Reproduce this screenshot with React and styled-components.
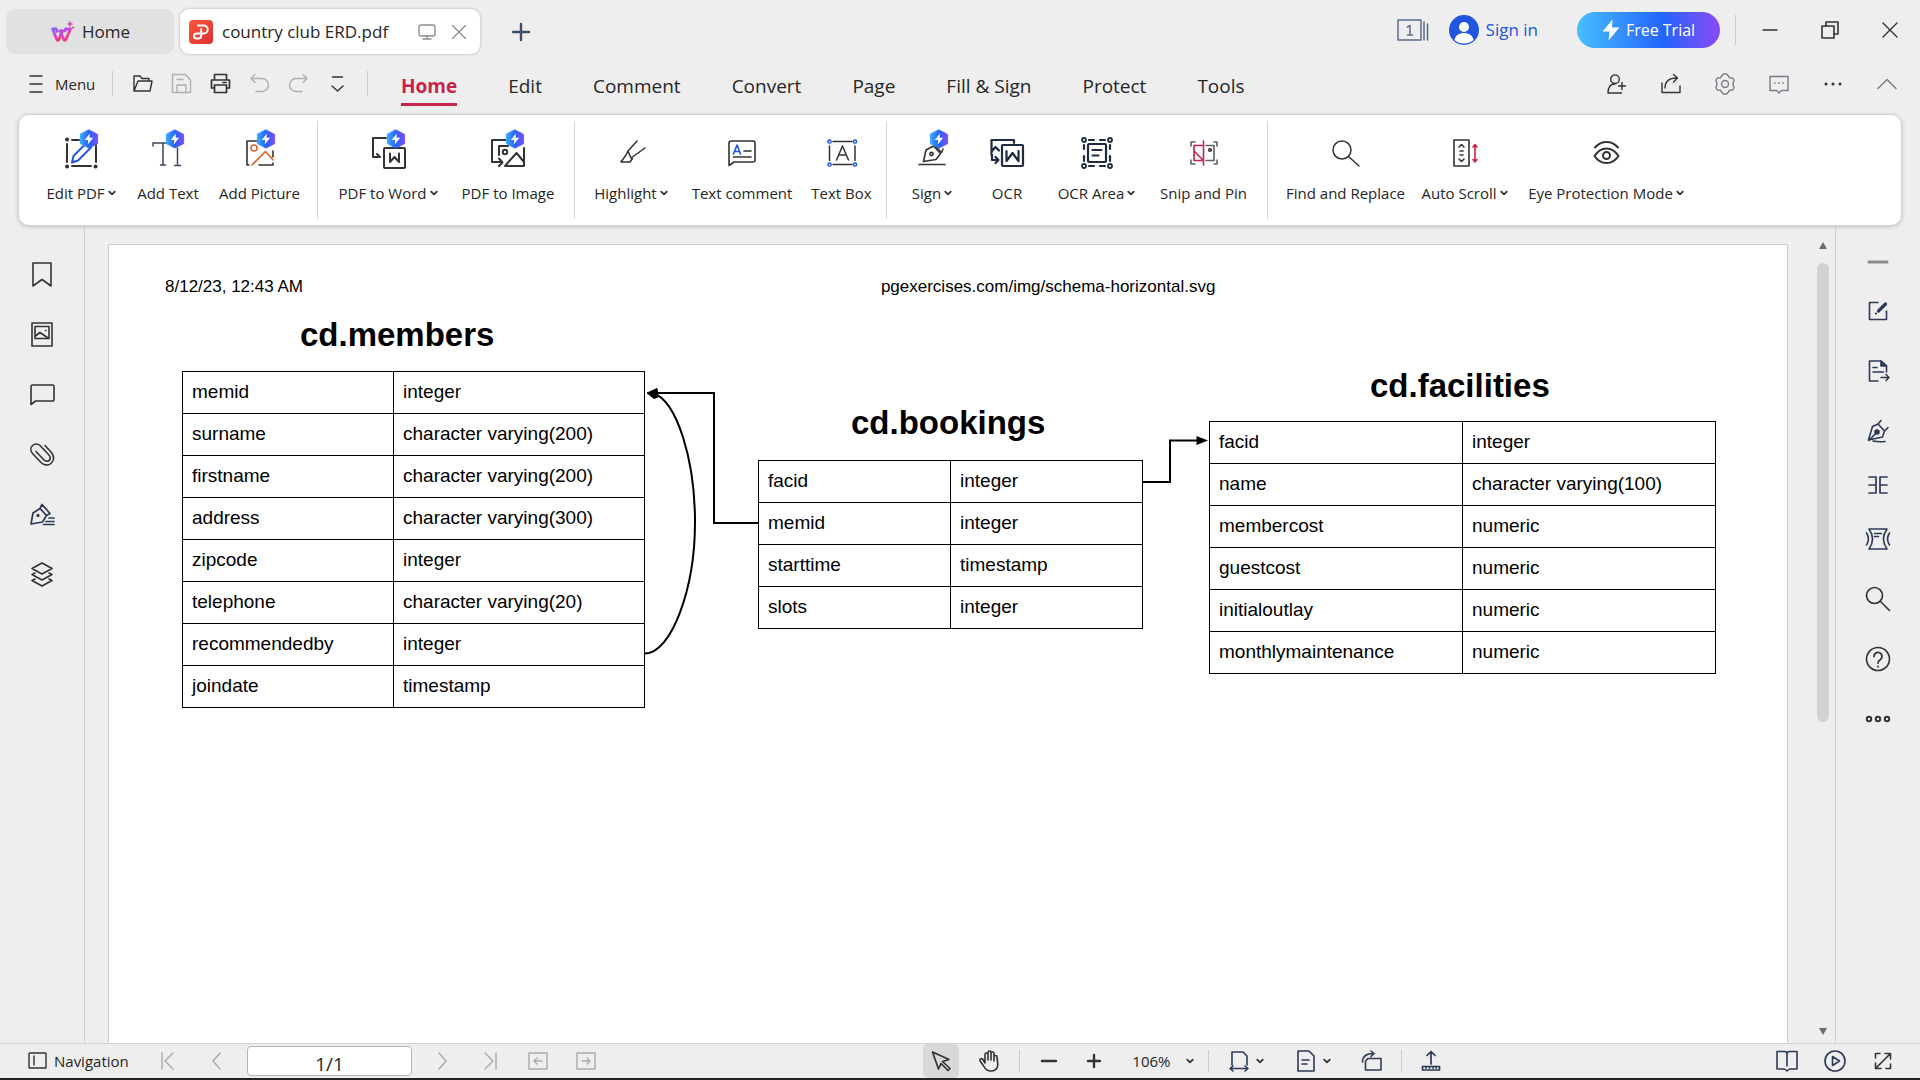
import React from "react";
import styled, { createGlobalStyle, css } from "styled-components";

const GlobalStyle = createGlobalStyle`
  *, *::before, *::after { box-sizing: border-box; }
  html, body { margin: 0; padding: 0; }
  body {
    background: #eeeeee;
    color: #262626;
    font-family: "Open Sans", "Noto Sans", sans-serif;
  }
  button, input, select { font-family: inherit; color: inherit; }
`;

const INK = "#333333";
const NAVY = "#2c3a57";
const BLUE = "#2356e0";
const RED = "#c8234a";

/* ---------- shared pieces ---------- */

const Shell = styled.div`
  display: flex;
  flex-direction: column;
  height: 100vh;
  overflow: hidden;
  border-bottom: 2px solid #222226;
`;

const PlainButton = styled.button`
  display: inline-flex;
  align-items: center;
  justify-content: center;
  padding: 0;
  border: 0;
  background: none;
  cursor: pointer;
  white-space: nowrap;
`;

const Slot = styled(PlainButton)`
  flex: 0 0 auto;
  width: ${(p) => p.$w}px;
  height: ${(p) => p.$h || 36}px;
  ${(p) => p.$active && css`
    background: #d8d8d8;
    border-radius: 5px;
  `}
`;

const Rule = styled.span`
  flex: 0 0 auto;
  width: 1px;
  height: ${(p) => p.$h}px;
  margin: 0 ${(p) => p.$gap}px;
  background: #cbcbcb;
`;

const Drawing = styled.svg`
  display: block;
  flex: 0 0 auto;
  overflow: visible;
`;

function Icon({ w = 24, h = 24, color = INK, sw = 1.4, children }) {
  return (
    <Drawing width={w} height={h} viewBox={`0 0 ${w} ${h}`} fill="none" stroke={color}
      strokeWidth={sw} strokeLinecap="round" strokeLinejoin="round" aria-hidden="true">
      {children}
    </Drawing>
  );
}

const Chevron = () => (
  <Icon w={8} h={8} sw={1.8}><path d="M1.2 2.6 4 5.4 6.8 2.6" /></Icon>
);

/* ---------- title bar ---------- */

const TitleBar = styled.header`
  display: flex;
  align-items: center;
  height: 63px;
  padding: 0 0 0 6px;
`;

const WindowTab = styled.div`
  display: flex;
  align-items: center;
  height: 45px;
  border-radius: 9px;
  font-size: 17px;
  line-height: 24px;
`;

const HomeTab = styled(PlainButton)`
  width: 168px;
  height: 45px;
  gap: 8px;
  border-radius: 9px;
  background: #e1e1e1;
  font-size: 17px;
  line-height: 24px;
`;

const FileTab = styled(WindowTab)`
  width: 300px;
  margin-left: 6px;
  padding: 0 5px 0 9px;
  background: #ffffff;
  box-shadow: 0 0 3px rgba(0, 0, 0, 0.28);
`;

const FileName = styled.span`
  flex: 1;
  margin-left: 9px;
  white-space: nowrap;
`;

const TitleRight = styled.div`
  display: flex;
  align-items: center;
  height: 60px;
  margin: 0 0 3px auto;
`;

const SignIn = styled(PlainButton)`
  gap: 7px;
  margin: 0 39px 0 20px;
  color: ${BLUE};
  font-size: 17px;
  line-height: 24px;
`;

const Trial = styled(PlainButton)`
  width: 143px;
  height: 36px;
  gap: 6px;
  margin-right: 11px;
  border-radius: 18px;
  color: #ffffff;
  background: linear-gradient(90deg, #45bfff 0%, #2464fc 60%, #8a4af5 100%);
  font-size: 16px;
  line-height: 24px;
`;

function WpsLogo() {
  return (
    <Drawing width="24" height="24" viewBox="0 0 24 24" aria-hidden="true">
      <defs>
        <linearGradient id="wps" x1="0" y1="0" x2="1" y2="1">
          <stop offset="0" stopColor="#7a6bff" />
          <stop offset="0.5" stopColor="#e03ad0" />
          <stop offset="1" stopColor="#ff3b2e" />
        </linearGradient>
      </defs>
      <g fill="none" stroke="url(#wps)" strokeWidth="2.8" strokeLinejoin="round">
        <path d="M7.500 12.500 6.200 9H2.600L7 20H8.600L13 9.600" />
        <path d="M9.500 9.600 14 20H15.600L20.600 9H15.500L14.500 12" />
      </g>
      <path d="M20 1.600v5M17.500 4.100h5" stroke="#d640a8" strokeWidth="1.500" />
      <path d="M23 6.400v2.400M21.800 7.600h2.400" stroke="#ff4068" strokeWidth="1" />
    </Drawing>
  );
}

function PdfLogo() {
  return (
    <Drawing width="24" height="24" viewBox="0 0 24 24" aria-hidden="true">
      <defs>
        <linearGradient id="pdf" x1="0" y1="0" x2="1" y2="1">
          <stop offset="0" stopColor="#fb5a3c" />
          <stop offset="1" stopColor="#dd2d33" />
        </linearGradient>
      </defs>
      <rect width="24" height="24" rx="4" fill="url(#pdf)" />
      <path d="M9 5.600h5.800a3.900 3.900 0 0 1 0 7.800H7.600a2.600 2.600 0 0 0 0 5.200h1.600c2 0 3-1 3-2.800V9" fill="none" stroke="#fff" strokeWidth="2" strokeLinecap="round" strokeLinejoin="round" />
    </Drawing>
  );
}

function TopBar() {
  return (
    <TitleBar>
      <HomeTab><WpsLogo />Home</HomeTab>
      <FileTab>
        <PdfLogo />
        <FileName>country club ERD.pdf</FileName>
        <Slot $w={32} aria-label="Display">
          <Icon w={18} h={18} color="#8d8d8d"><rect x="1" y="2" width="16" height="11" rx="2" /><path d="M9 13v3M5 16h8" /></Icon>
        </Slot>
        <Slot $w={32} aria-label="Close tab">
          <Icon w={16} h={16} color="#8d8d8d"><path d="M1.500 1.500 14.500 14.500M14.500 1.500 1.500 14.500" /></Icon>
        </Slot>
      </FileTab>
      <Slot $w={82} aria-label="New tab">
        <Icon w={20} h={20} color="#3f4f70" sw={2.4}><path d="M10 2v16M2 10h16" /></Icon>
      </Slot>
      <TitleRight>
        <Slot $w={32} aria-label="Window list">
          <Icon w={32} h={24} color="#5a6c8c" sw={1.5}>
            <rect x="1" y="2" width="23" height="20" />
            <path d="M27 4v18M30.500 6v16" />
            <path d="M10.500 9 13 7.500V17M10.500 17h5" />
          </Icon>
        </Slot>
        <SignIn>
          <Drawing width="30" height="30" viewBox="0 0 30 30" aria-hidden="true">
            <circle cx="15" cy="15" r="15" fill={BLUE} />
            <circle cx="15" cy="12" r="5" fill="#fff" />
            <path d="M5.500 25c1-5 5-7 9.500-7s8.500 2 9.500 7c-2.500 2.400-5.800 3.600-9.500 3.600S8 27.400 5.500 25Z" fill="#fff" />
          </Drawing>
          Sign in
        </SignIn>
        <Trial>
          <Drawing width="18" height="22" viewBox="0 0 18 22" aria-hidden="true">
            <path d="M10.500 0.500 0.500 12.500H7.500L6.500 21.500 17.500 8.500H10Z" fill="#fff" />
          </Drawing>
          Free Trial
        </Trial>
        <Rule $h={30} $gap={4} />
        <Slot $w={60} aria-label="Minimize"><Icon w={16} h={16}><path d="M1 8h14" /></Icon></Slot>
        <Slot $w={60} aria-label="Restore">
          <Icon w={18} h={18} sw={1.6}><rect x="1" y="5" width="12" height="12" /><path d="M5 5V1h12v12h-4" /></Icon>
        </Slot>
        <Slot $w={60} aria-label="Close"><Icon w={16} h={16}><path d="M1 1 15 15M15 1 1 15" /></Icon></Slot>
      </TitleRight>
    </TitleBar>
  );
}

/* ---------- menu row ---------- */

const MenuRow = styled.nav`
  display: flex;
  align-items: center;
  height: 51px;
  padding: 0 6px 10px 29px;
`;

const MenuButton = styled(PlainButton)`
  gap: 12px;
  width: 73px;
  justify-content: flex-start;
  font-size: 15px;
  line-height: 24px;
`;

const MenuTabs = styled.div`
  display: flex;
  gap: 51px;
  margin-left: 23px;
`;

const MenuTab = styled(PlainButton)`
  height: 40px;
  margin-top: 5px;
  padding-top: 2px;
  border-bottom: 3px solid ${(p) => (p.$on ? RED : "transparent")};
  color: ${(p) => (p.$on ? RED : "#262626")};
  font-size: 19px;
  font-weight: ${(p) => (p.$on ? 700 : 400)};
  line-height: 28px;
`;

const MenuRight = styled.div`
  display: flex;
  margin-left: auto;
`;

const TABS = ["Home", "Edit", "Comment", "Convert", "Page", "Fill & Sign", "Protect", "Tools"];

const QUICK = [
  ["Open", INK, <path key="a" d="M2 18V3h6l2 2.500h7V8M2 18 6 8h14l-2 10Z" />],
  ["Save", "#b0b0b0", <path key="a" d="M1.500 1.500H14.500L19.500 7V19.500H1.500ZM6 19V12h9v7M6 6.500h6" />],
  ["Print", INK, <path key="a" strokeWidth="1.7" d="M4.500 7V1.500h12V7M4.500 15H1.500V7h18v8h-3M4.500 12h12v7.500h-12ZM13 9.500h3" />],
  ["Undo", "#b0b0b0", <path key="a" d="M6 1.500 2 5.500 6 9.500M2 5.500H13a6.500 6.500 0 0 1 0 13H7" />],
  ["Redo", "#b0b0b0", <path key="a" d="M15 1.500 19 5.500 15 9.500M19 5.500H8a6.500 6.500 0 0 0 0 13h6" />],
  ["Customize", INK, <path key="a" d="M5.500 4h10M5 13l5.500 5 5.500-5" />],
];

const GRAY = "#777c88";
const MENU_TOOLS = [
  ["Invite", INK, <path key="a" d="M9 10.500a4.300 4.300 0 1 0 0-8.600 4.300 4.300 0 0 0 0 8.600ZM9 11C4.500 11 2 14 2 20h13.500M16 9.500v7M12.500 13h7" />],
  ["Share", INK, <path key="a" d="M2 10v9.500h18V13M5 15c0-6 4-10 12-10M13.500 1.500 17.500 5 13.500 9" />],
  ["Settings", GRAY, <g key="a"><path d="M8 2.500 9.500 1h3L14 2.500l1.500 2.200 3.300.3 1.300 2.500-1.300 3.500 1.300 3.500-1.300 2.500-3.300.3L14 19.500 12.500 21h-3L8 19.500l-1.500-2.200-3.300-.3-1.300-2.500L3.200 11 1.900 7.500 3.200 5l3.300-.3Z" /><circle cx="11" cy="11" r="3.500" /></g>],
  ["Feedback", GRAY, <path key="a" d="M2 3.500h18v14h-6.500L11 20l-2.500-2.500H2ZM6.500 10h.6M10.700 10h.6M14.900 10h.6" />],
  ["More", INK, <g key="a" fill={INK} stroke="none"><circle cx="4" cy="11" r="1.500" /><circle cx="11" cy="11" r="1.500" /><circle cx="18" cy="11" r="1.500" /></g>],
  ["Collapse ribbon", GRAY, <path key="a" d="M2 15.500 11 6.500l9 9" />],
];

function Menu() {
  return (
    <MenuRow aria-label="Main menu">
      <MenuButton>
        <Icon w={14} h={18}><path d="M1 1h12M1 9h12M1 17h12" /></Icon>Menu
      </MenuButton>
      <Rule $h={25} $gap={10} />
      {QUICK.map(([label, color, shape]) => (
        <Slot key={label} $w={39} aria-label={label}>
          <Icon w={21} h={21} color={color}>{shape}</Icon>
        </Slot>
      ))}
      <Rule $h={25} $gap={10} />
      <MenuTabs>
        {TABS.map((t) => <MenuTab key={t} $on={t === "Home"}>{t}</MenuTab>)}
      </MenuTabs>
      <MenuRight>
        {MENU_TOOLS.map(([label, color, shape]) => (
          <Slot key={label} $w={54} aria-label={label}>
            <Icon w={22} h={22} color={color}>{shape}</Icon>
          </Slot>
        ))}
      </MenuRight>
    </MenuRow>
  );
}

/* ---------- ribbon ---------- */

const Ribbon = styled.section`
  display: flex;
  flex: 0 0 auto;
  height: 112px;
  margin: 0 18px;
  padding: 0 17px;
  border: 1px solid #d2d2d2;
  border-radius: 11px;
  background: #ffffff;
  box-shadow: 0 1px 4px rgba(0, 0, 0, 0.18);
`;

const RibbonRule = styled.span`
  flex: 0 0 auto;
  width: 1px;
  margin: 6px 8px;
  background: #d6d6d6;
`;

const Tool = styled(PlainButton)`
  flex: 0 0 auto;
  flex-direction: column;
  justify-content: flex-start;
  width: ${(p) => p.$w}px;
  padding-top: 14px;
`;

const ToolLabel = styled.span`
  display: flex;
  align-items: center;
  gap: 3px;
  font-size: 15px;
  line-height: 32px;
`;

function Bolt({ x }) {
  return (
    <g stroke="none">
      <path d={`M${x} 1 ${x + 8.6} 5.400V14.600L${x} 19 ${x - 8.6} 14.600V5.400Z`} fill="url(#bolt)" stroke="url(#bolt)" strokeWidth="1" />
      <path d={`M${x + 0.8} 4.600 ${x - 4.2} 11H${x - 0.8}L${x - 1.2} 15.400 ${x + 4.2} 8.800H${x + 0.6}Z`} fill="#fff" />
    </g>
  );
}

const ORANGE = "#d8662c";

const ART = {
  editPdf: (
    <g strokeWidth="2">
      <path d="M6 15v18M11 11h7M35 16v17M11 37h19" />
      <path d="M6 10.500h.1M6 37.500h.1M34.500 37.500h.1" strokeWidth="4" strokeLinejoin="miter" />
      <path d="M11 33.500 12.500 27 25.500 14 30 18.500 17 31.500Z" stroke={BLUE} />
      <Bolt x={28} />
    </g>
  ),
  addText: (
    <g stroke="#3c465e" strokeWidth="1.500">
      <path d="M5 17V14H21M15 14V36M12.500 36h5M29.500 19V36M26.500 36.500h6" />
      <Bolt x={27} />
    </g>
  ),
  addPicture: (
    <g strokeWidth="1.600">
      <path d="M22 12H7V36M33 22V28M19 36H33V34M7 36H9" />
      <circle cx="14" cy="19" r="3" stroke={ORANGE} />
      <path d="M12 36 25.500 22.500 33 31" stroke={ORANGE} />
      <Bolt x={26} />
    </g>
  ),
  toWord: (
    <g strokeWidth="2">
      <path d="M18 9H5V28H12M9 25l3 3" />
      <rect x="16" y="19" width="21" height="20" rx="1" />
      <path d="M22 24.500V33L26.500 28 31 33V24.500" />
      <Bolt x={28} />
    </g>
  ),
  toImage: (
    <g strokeWidth="2">
      <path d="M20 11H4V33H14M11 29.500 14.500 33.500 11 37" />
      <path d="M20 17H11V26M36 19V37H17L28.500 24 36 33" />
      <circle cx="17" cy="23" r="2.200" />
      <Bolt x={27} />
    </g>
  ),
  highlight: (
    <path d="M26 12 17 22 20 29 34 19M17 22 15 26 10 33H19L21.500 29.500" strokeWidth="1.500" />
  ),
  comment: (
    <g strokeWidth="1.600">
      <path d="M9 12H31a2 2 0 0 1 2 2V31a2 2 0 0 1-2 2H12L7 36.500V14a2 2 0 0 1 2-2Z" />
      <path d="M11.500 25 15 16 18.500 25M12.700 22.500h4.600" stroke={BLUE} />
      <path d="M22 22h7M11.500 28h17.500" />
    </g>
  ),
  textBox: (
    <g strokeWidth="1.500">
      <path d="M11 12.500H30M7.500 17V31.500M33 17V31.500M11 35.500H30" />
      <path d="M14.500 31 20.500 17 26.500 31M17 26h7" />
      <g stroke={BLUE}><circle cx="7.500" cy="12.500" r="1.600" /><circle cx="33" cy="12.500" r="1.600" /><circle cx="7.500" cy="35.500" r="1.600" /><circle cx="33" cy="35.500" r="1.600" /></g>
    </g>
  ),
  sign: (
    <g strokeWidth="1.600">
      <path d="M7 35.500H33" />
      <path d="M11.500 32.500 14 21 21.500 17 28.500 24.500 24 30.500Z" />
      <circle cx="19.500" cy="25" r="1.600" />
      <path d="M23 17 29.500 23.500 31 20" />
      <Bolt x={27} />
    </g>
  ),
  ocr: (
    <g stroke="#1e2b40" strokeWidth="2.200">
      <path d="M27 14V11H4.500V26M5 22 8.500 18 12 21.500M5 26V31H10.500M8.500 28 11.500 31 8.500 34" />
      <rect x="15" y="16" width="21" height="21" rx="1" />
      <path d="M19.500 22V32L25.500 24 31.500 32V22" />
    </g>
  ),
  ocrArea: (
    <g stroke="#1e2b40" strokeWidth="2.200">
      <g strokeWidth="1.800"><circle cx="7" cy="11" r="2" /><circle cx="33" cy="11" r="2" /><circle cx="7" cy="37" r="2" /><circle cx="33" cy="37" r="2" /></g>
      <path d="M12 11h5M23 11h5M12 37h5M23 37h5M7 16v4M7 27v5M33 16v4M33 27v5" />
      <rect x="11" y="15" width="18" height="18" rx="1" />
      <path d="M15.500 21h9M15.500 26.500h6" />
    </g>
  ),
  snip: (
    <g strokeWidth="1.600">
      <path d="M7 17V13H11M30 13H33V17M7 31V35H11M30 35H33V31M22 16.500H30V31.500H22" stroke="#606060" />
      <circle cx="26" cy="21" r="1.300" />
      <path d="M19.500 12V36M19.500 16.500H10V31.500H19.500L10 22" stroke={RED} />
    </g>
  ),
  find: <path d="M16 30a9 9 0 1 0 0-18 9 9 0 0 0 0 18ZM22.500 27.500 33 37" strokeWidth="1.500" />,
  scroll: (
    <g strokeWidth="1.600">
      <rect x="9" y="11" width="15" height="26" />
      <path d="M14 18 16.500 15.500 19 18M14 30 16.500 32.500 19 30M15 22h3M15 26h3" />
      <path d="M30 15.500V33M28 18 30 15.500 32 18M28 30.500 30 33 32 30.500" stroke={RED} />
    </g>
  ),
  eye: (
    <g strokeWidth="2">
      <path d="M8.500 27c3-4.600 7.500-7.500 12-7.500s9 2.900 12 7.500c-3 4.600-7.500 7-12 7s-9-2.400-12-7Z" />
      <circle cx="20.500" cy="26.500" r="3.500" />
      <path d="M9 18.500c3-3.500 7-5.500 11.500-5.500s8.500 2 11.500 5.500" />
    </g>
  ),
};

const GROUPS = [
  [["Edit PDF", 90, "editPdf", true], ["Add Text", 84, "addText"], ["Add Picture", 99, "addPicture"]],
  [["PDF to Word", 124, "toWord", true], ["PDF to Image", 116, "toImage"]],
  [["Highlight", 96, "highlight", true], ["Text comment", 126, "comment"], ["Text Box", 73, "textBox"]],
  [["Sign", 74, "sign", true], ["OCR", 76, "ocr"], ["OCR Area", 103, "ocrArea", true], ["Snip and Pin", 111, "snip"]],
  [["Find and Replace", 139, "find"], ["Auto Scroll", 99, "scroll", true], ["Eye Protection Mode", 184, "eye", true]],
];

function RibbonBar() {
  return (
    <Ribbon aria-label="Home tools">
      <Drawing width="0" height="0" aria-hidden="true">
        <defs>
          <linearGradient id="bolt" x1="0" y1="0" x2="1" y2="0">
            <stop offset="0" stopColor="#3aa9ff" />
            <stop offset="0.500" stopColor="#2563fb" />
            <stop offset="1" stopColor="#7b4ff8" />
          </linearGradient>
        </defs>
      </Drawing>
      {GROUPS.map((group, i) => (
        <React.Fragment key={i}>
          {i > 0 && <RibbonRule />}
          {group.map(([label, w, art, menu]) => (
            <Tool key={label} $w={w}>
              <Icon w={40} h={48}>{ART[art]}</Icon>
              <ToolLabel>{label}{menu && <Chevron />}</ToolLabel>
            </Tool>
          ))}
        </React.Fragment>
      ))}
    </Ribbon>
  );
}

/* ---------- workspace ---------- */

const Workspace = styled.main`
  display: flex;
  flex: 1 1 0;
  min-height: 0;
`;

const LeftRail = styled.aside`
  display: flex;
  flex: 0 0 85px;
  flex-direction: column;
  align-items: center;
  padding-top: 18px;
  border-right: 1px solid #cfcfcf;
`;

const RightRail = styled(LeftRail)`
  padding-top: 17px;
  border-right: 0;
  border-left: 1px solid #cfcfcf;
`;

const Viewer = styled.div`
  display: flex;
  flex: 1;
  min-width: 0;
  padding: 18px 0 0 23px;
`;

const ScrollBar = styled.div`
  display: flex;
  flex: 0 0 47px;
  flex-direction: column;
  align-items: center;
  padding: 0 0 8px 22px;
`;

const Thumb = styled.div`
  flex: 0 0 58%;
  width: 12px;
  margin-top: 14px;
  border-radius: 6px;
  background: #d2d2d2;
`;

const ScrollArrow = styled.span`
  width: 0;
  height: 0;
  border: 4px solid transparent;
  border-top-width: ${(p) => (p.$down ? 7 : 0)}px;
  border-bottom-width: ${(p) => (p.$down ? 0 : 7)}px;
  border-top-color: ${(p) => (p.$down ? "#6c6c6c" : "transparent")};
  border-bottom-color: ${(p) => (p.$down ? "transparent" : "#6c6c6c")};
  margin-top: ${(p) => (p.$down ? "auto" : "-2px")};
`;

const Sheet = styled.article`
  position: relative;
  flex: 1;
  min-width: 0;
  overflow: hidden;
  border: 1px solid #d0d0d0;
  border-bottom: 0;
  background: #ffffff;
  color: #000000;
  font-family: "Liberation Sans", Arial, sans-serif;
`;

const SheetHead = styled.div`
  display: grid;
  grid-template-columns: 46% 1fr;
  padding-top: 30px;
  font-size: 17px;
  line-height: 24px;
`;

const PrintDate = styled.span`
  padding-left: 56px;
`;

const EntityName = styled.h2`
  position: absolute;
  left: ${(p) => p.$x}px;
  top: ${(p) => p.$y}px;
  margin: 0;
  font-size: 33px;
  line-height: 40px;
`;

const Entity = styled.table`
  position: absolute;
  left: ${(p) => p.$x}px;
  top: ${(p) => p.$y}px;
  width: ${(p) => p.$w}px;
  border-collapse: collapse;
  table-layout: fixed;
  font-size: 19px;
  line-height: 24px;
`;

const FirstCol = styled.col`
  width: ${(p) => p.$w}px;
`;

const Cell = styled.td`
  height: 42px;
  padding: 0 0 2px 9px;
  border: 1px solid #000000;
`;

const Links = styled.svg`
  position: absolute;
  left: 0;
  top: 0;
  width: 1400px;
  height: 500px;
`;

const ENTITIES = [
  {
    name: "cd.members", x: 73, y: 126, w: 463, col: 211, nameX: 191, nameY: 70,
    rows: [["memid", "integer"], ["surname", "character varying(200)"], ["firstname", "character varying(200)"], ["address", "character varying(300)"], ["zipcode", "integer"], ["telephone", "character varying(20)"], ["recommendedby", "integer"], ["joindate", "timestamp"]],
  },
  {
    name: "cd.bookings", x: 649, y: 215, w: 385, col: 192, nameX: 742, nameY: 158,
    rows: [["facid", "integer"], ["memid", "integer"], ["starttime", "timestamp"], ["slots", "integer"]],
  },
  {
    name: "cd.facilities", x: 1100, y: 176, w: 507, col: 253, nameX: 1261, nameY: 121,
    rows: [["facid", "integer"], ["name", "character varying(100)"], ["membercost", "numeric"], ["guestcost", "numeric"], ["initialoutlay", "numeric"], ["monthlymaintenance", "numeric"]],
  },
];

function Diagram() {
  return (
    <>
      {ENTITIES.map((e) => (
        <React.Fragment key={e.name}>
          <EntityName $x={e.nameX} $y={e.nameY}>{e.name}</EntityName>
          <Entity $x={e.x} $y={e.y} $w={e.w} aria-label={e.name}>
            <colgroup><FirstCol $w={e.col} /><col /></colgroup>
            <tbody>
              {e.rows.map(([field, type]) => (
                <tr key={field}><Cell>{field}</Cell><Cell>{type}</Cell></tr>
              ))}
            </tbody>
          </Entity>
        </React.Fragment>
      ))}
      <Links viewBox="0 0 1400 500" fill="none" stroke="#000" strokeWidth="2" aria-hidden="true">
        <path d="M649 278H605V148H545" />
        <path d="M536 408.500C562 408 586 345 586 277 586 215 568 156 544 148" />
        <path d="M538 148 548 143.500 549 152 545 153.500Z" fill="#000" strokeWidth="1" />
        <path d="M1034 237H1061V195.500H1090" />
        <path d="M1099 195.500 1087.500 191V200Z" fill="#000" stroke="none" />
      </Links>
    </>
  );
}

const LEFT_TOOLS = [
  ["Bookmarks", INK, <path key="a" d="M4 2H22V25L13 18.500 4 25Z" />],
  ["Thumbnails", INK, <g key="a"><rect x="3" y="2" width="20" height="23" /><rect x="6" y="5.500" width="14" height="12" /><path d="M6.500 15 11 11.500 19 17M16.500 9.500h.5" /></g>],
  ["Comments", INK, <path key="a" d="M3.500 4h20a1.500 1.500 0 0 1 1.500 1.500V18.500A1.500 1.500 0 0 1 23.500 20H6.500L2 23.500V5.500A1.500 1.500 0 0 1 3.500 4Z" />],
  ["Attachments", INK, <path key="a" d="M16 4.500 21.500 10.500C26 15 25 20 22 22.500S14.500 24 12 21.500L4 13C1 10 1.500 6.500 3.500 4.500S9 2.500 11 4.500L19.500 13.500C22 16 21.500 18.500 20 19.500S16 20 14.500 18.500L7 10.500" />],
  ["Signatures", NAVY, <g key="a" strokeWidth="1.700"><path d="M2 23 4 12 11 7.500 17.500 14.500 13.500 21ZM11 7.500 13 3.500 21 12.500 17.500 14.500" /><circle cx="9" cy="14.500" r="0.800" /><path d="M20 17h5M17 20.500h8M14.500 23.500H25" /></g>],
  ["Layers", INK, <path key="a" d="M13 2 23 7.500 13 13 3 7.500ZM6 12 3 13.500 13 19 23 13.500 20 12M6 18 3 19.500 13 25 23 19.500 20 18" />],
];

const RIGHT_TOOLS = [
  ["Collapse", 38, "#8b8b8b", <path key="a" strokeWidth="3" d="M3 12h18" />],
  ["Edit", 60, NAVY, <g key="a"><path d="M12 3.500H3.500V20.500H20.500V12" /><path d="M12.500 12 19.500 5" strokeWidth="3.200" /><path d="M9.800 14.600h.2" strokeWidth="2" /></g>],
  ["Export", 60, NAVY, <g key="a"><path d="M12 22H3.500V2H15L20.500 7V13M7 8.500h4M7 13h10.500M15 18.500h8M20 15.500 23 18.500 20 21.500" /><path d="M15 2V7H20.500Z" fill={NAVY} /></g>],
  ["Sign", 60, NAVY, <g key="a"><path d="M2.500 21 6.500 7.500 12 5 18.500 12 16.500 18ZM12 5 15 1.500M18.500 12 22 8.500M3 21.500 11 13M7 22c5 1 8 1 12 .5" /><circle cx="11" cy="13" r="2" fill={NAVY} /></g>],
  ["Split and merge", 48, NAVY, <path key="a" strokeWidth="1.700" d="M3 4h7V20H3M3 12h7M21 4h-7V20h7M14 12h7" />],
  ["Compress", 60, NAVY, <path key="a" d="M3 2H21C16 9 16 15 21 22H3C8 15 8 9 3 2ZM8.500 6.500h7M8.500 9.500h4M.5 6c2.600 4 2.600 8 0 12M23.500 6c-2.600 4-2.600 8 0 12" />],
  ["Search", 60, INK, <path key="a" d="M8.500 16.500a8 8 0 1 0 0-16 8 8 0 0 0 0 16ZM14.500 14.500 23.500 23.500" />],
  ["Help", 60, INK, <g key="a"><circle cx="12" cy="12" r="11.500" /><path d="M8 9.500a4 4 0 1 1 6.500 3c-1.600 1-2.500 1.600-2.500 3.500M12 19.500v.2" strokeWidth="1.800" /></g>],
  ["More tools", 60, INK, <g key="a" strokeWidth="2"><circle cx="3" cy="12" r="2.200" /><circle cx="12" cy="12" r="2.200" /><circle cx="21" cy="12" r="2.200" /></g>],
];

function Body() {
  return (
    <Workspace>
      <LeftRail>
        {LEFT_TOOLS.map(([label, color, shape]) => (
          <Slot key={label} $w={60} $h={60} aria-label={label}>
            <Icon w={26} h={27} color={color} sw={1.6}>{shape}</Icon>
          </Slot>
        ))}
      </LeftRail>
      <Viewer>
        <Sheet>
          <SheetHead>
            <PrintDate>8/12/23, 12:43 AM</PrintDate>
            <span>pgexercises.com/img/schema-horizontal.svg</span>
          </SheetHead>
          <Diagram />
        </Sheet>
        <ScrollBar>
          <ScrollArrow />
          <Thumb />
          <ScrollArrow $down />
        </ScrollBar>
      </Viewer>
      <RightRail>
        {RIGHT_TOOLS.map(([label, h, color, shape]) => (
          <Slot key={label} $w={60} $h={h} aria-label={label}>
            <Icon color={color} sw={1.6}>{shape}</Icon>
          </Slot>
        ))}
      </RightRail>
    </Workspace>
  );
}

/* ---------- status bar ---------- */

const StatusBar = styled.footer`
  display: flex;
  flex: 0 0 auto;
  align-items: center;
  height: 35px;
  padding-right: 13px;
  border-top: 1px solid #d2d2d2;
`;

const StatusLeft = styled.div`
  display: flex;
  flex: 0 0 48%;
  align-items: center;
  padding-left: 28px;
`;

const StatusMiddle = styled.div`
  display: flex;
  align-items: center;
  padding-left: 8px;
`;

const StatusRight = styled.div`
  display: flex;
  margin-left: auto;
`;

const NavButton = styled(PlainButton)`
  justify-content: flex-start;
  gap: 7px;
  width: 117px;
  font-size: 15px;
  line-height: 24px;
`;

const PageField = styled.input`
  width: 165px;
  height: 30px;
  margin: 0 6px;
  padding: 5px 0 0;
  border: 1px solid #b4b4b4;
  border-radius: 4px;
  background: #ffffff;
  font-size: 19px;
  line-height: 24px;
  text-align: center;
`;

const ZoomLabel = styled.label`
  display: flex;
  align-items: center;
  width: 76px;
  margin-left: 21px;
`;

const ZoomSelect = styled.select`
  appearance: none;
  width: 54px;
  margin: 0;
  padding: 0;
  border: 0;
  background: none;
  font-size: 15px;
  line-height: 24px;
`;

const MenuSlot = styled(PlainButton)`
  gap: 7px;
  width: ${(p) => p.$w}px;
  height: 34px;
`;

const PALE = "#aaaaaa";
const first = [
  ["First page", <path key="a" d="M4 3v16M15 3 7 11l8 8" />],
  ["Previous page", <path key="a" d="M14 3 7 11l7 8" />],
];
const last = [
  ["Next page", <path key="a" d="M8 3l7 8-7 8" />],
  ["Last page", <path key="a" d="M17 3v16M6 3l8 8-8 8" />],
  ["Back", <path key="a" d="M2 3h18v16H2ZM15 11H7M10 8 7 11l3 3" />],
  ["Forward", <path key="a" d="M2 3h18v16H2ZM7 11h8M12 8l3 3-3 3" />],
];

function Status() {
  return (
    <StatusBar>
      <StatusLeft>
        <NavButton>
          <Icon w={19} h={18}><rect x="1" y="1" width="17" height="15" rx="0.500" /><path d="M6 4v9" /></Icon>
          Navigation
        </NavButton>
        {first.map(([label, shape]) => (
          <Slot key={label} $w={48} $h={34} aria-label={label}><Icon w={22} h={22} color={PALE}>{shape}</Icon></Slot>
        ))}
        <PageField aria-label="Page number" defaultValue="1/1" />
        {last.map(([label, shape]) => (
          <Slot key={label} $w={48} $h={34} aria-label={label}><Icon w={22} h={22} color={PALE}>{shape}</Icon></Slot>
        ))}
      </StatusLeft>
      <StatusMiddle>
        <Slot $w={36} $h={34} $active aria-label="Select">
          <Icon w={22} h={22} sw={1.7}><path d="M2.500 2 19 9.500 12.500 11.500 20 18.500 18 20.500 11 13.500 8.500 19Z" /></Icon>
        </Slot>
        <Slot $w={60} $h={34} aria-label="Hand">
          <Icon w={22} h={22} sw={1.6}><path d="M7 12.500V4.500a1.500 1.500 0 0 1 3 0V10M10 10V2.500a1.500 1.500 0 0 1 3 0V10M13 10V3.500a1.500 1.500 0 0 1 3 0V11M16 7a1.500 1.500 0 0 1 3 0c0 3 1.500 6 .5 9.500C18.500 20 16 21 13 21c-3.500 0-5.500-1.500-7-4.500L1.800 10.500C1.500 8.500 4 8 5 9.500L7 13" /></Icon>
        </Slot>
        <Rule $h={22} $gap={0} />
        <Slot $w={57} $h={34} aria-label="Zoom out"><Icon w={20} h={20} sw={2.4}><path d="M3 10h14" /></Icon></Slot>
        <Slot $w={34} $h={34} aria-label="Zoom in"><Icon w={20} h={20} sw={2.4}><path d="M4 10h12M10 4v12" /></Icon></Slot>
        <ZoomLabel>
          <ZoomSelect aria-label="Zoom" defaultValue="106"><option value="106">106%</option></ZoomSelect>
          <Chevron />
        </ZoomLabel>
        <Rule $h={22} $gap={0} />
        <MenuSlot $w={74} aria-label="Fit width">
          <Icon w={20} h={22} color={NAVY} sw={1.6}><path d="M3 15V2H14L18 6V15M1 18.500H19M4 16 1 18.500 4 21M16 16 19 18.500 16 21" /></Icon>
          <Chevron />
        </MenuSlot>
        <MenuSlot $w={60} aria-label="Page layout">
          <Icon w={20} h={22} color={NAVY} sw={1.6}><path d="M2 1H13L18 6V21H2ZM6 10h7M6 14h5" /></Icon>
          <Chevron />
        </MenuSlot>
        <Slot $w={58} $h={34} aria-label="Rotate">
          <Icon w={22} h={22} color={NAVY} sw={1.6}><path d="M4.500 11 7 8.500H20V20H4.500ZM1.500 12C1.500 6 5 3.500 12.500 3.500M10 1l3 2.500L10 6.500" /></Icon>
        </Slot>
        <Rule $h={22} $gap={0} />
        <Slot $w={58} $h={34} aria-label="Upload">
          <Icon w={22} h={22} color={NAVY} sw={1.7}><path d="M11 14V2M7 5.500 11 1.500l4 4M2.500 16.500h17v3.500h-17ZM6 17v1M9.500 17v1M13 17v1M16 17v1" /></Icon>
        </Slot>
      </StatusMiddle>
      <StatusRight>
        <Slot $w={48} $h={34} aria-label="Reading mode">
          <Icon w={22} h={22} color={NAVY} sw={1.6}><path d="M1 1.500H8.500Q11 1.500 11 4Q11 1.500 13.500 1.500H21V19H13.500L11 21 8.500 19H1ZM11 4V16" /></Icon>
        </Slot>
        <Slot $w={48} $h={34} aria-label="Play">
          <Icon w={22} h={22} color={NAVY} sw={1.6}><circle cx="11" cy="11" r="10" /><path d="M8.500 6.500 15.500 11 8.500 15.500Z" /></Icon>
        </Slot>
        <Slot $w={48} $h={34} aria-label="Full screen">
          <Icon w={22} h={22} sw={1.6}><path d="M3.500 18.500 18.500 3.500M13 3.500h5.500V9M3.500 13v5.500H9M8 3.500H3.500V8M14 18.500h4.500V14" /></Icon>
        </Slot>
      </StatusRight>
    </StatusBar>
  );
}

export default function App() {
  return (
    <>
      <GlobalStyle />
      <Shell>
        <TopBar />
        <Menu />
        <RibbonBar />
        <Body />
        <Status />
      </Shell>
    </>
  );
}
